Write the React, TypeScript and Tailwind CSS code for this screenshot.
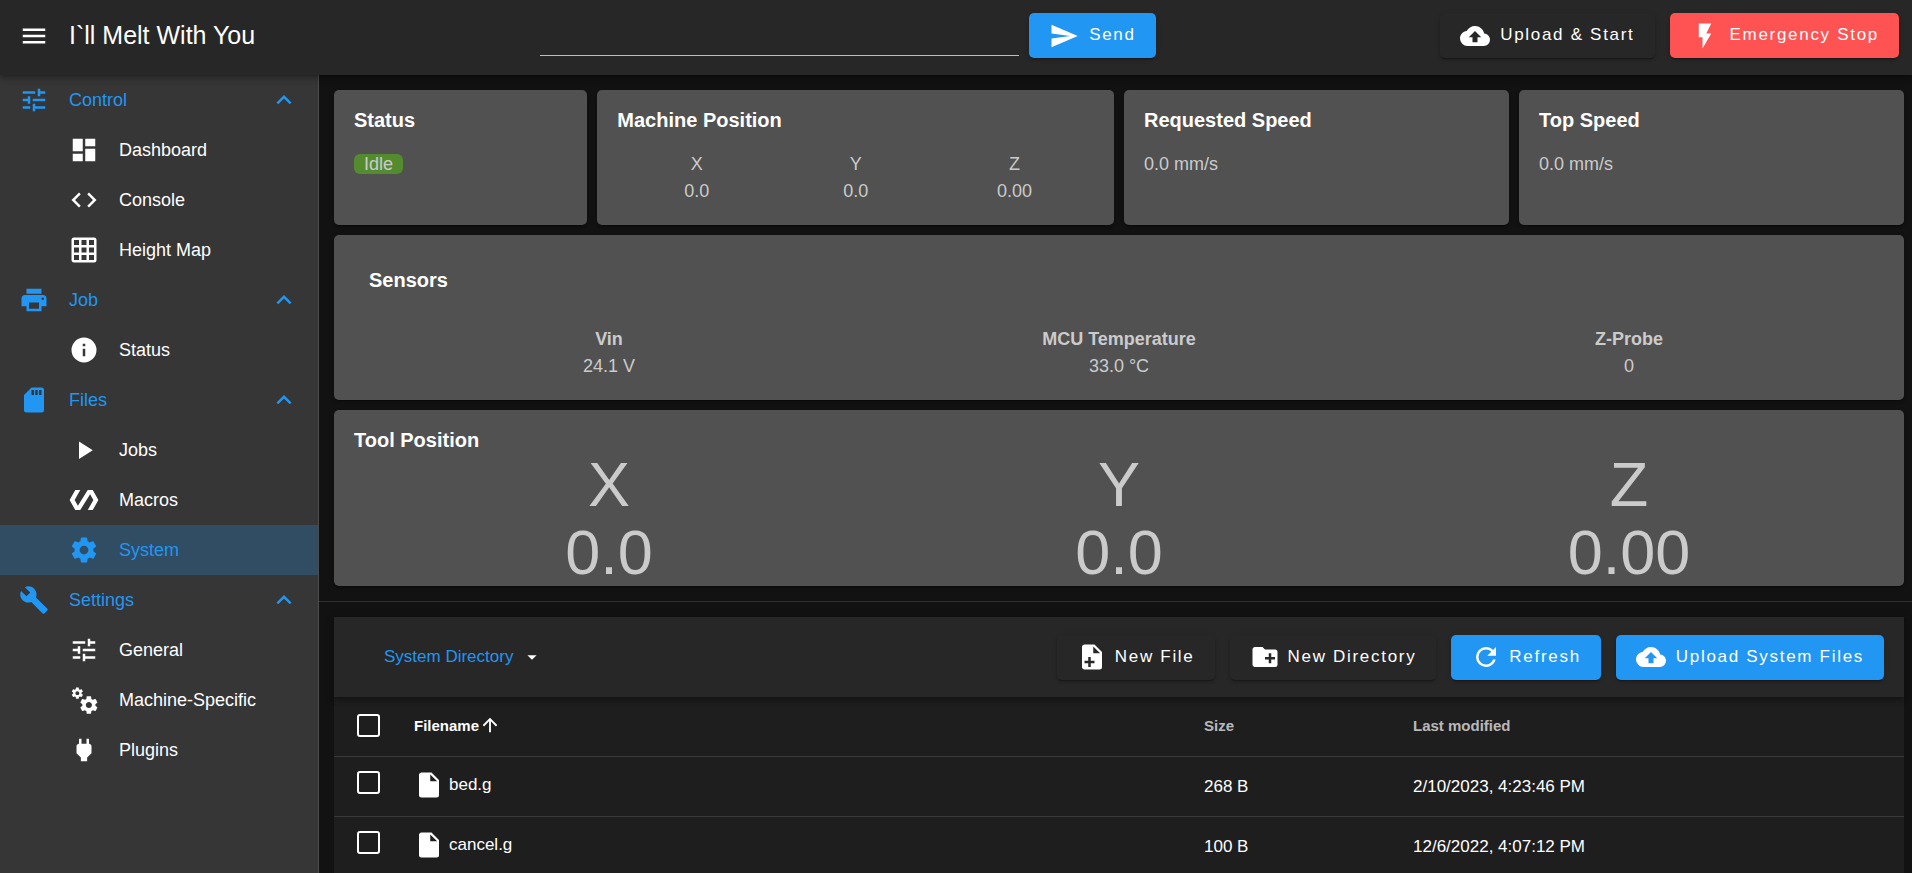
import type { ReactNode } from 'react';

const icons = {
  menu: 'M3,6H21V8H3V6M3,11H21V13H3V11M3,16H21V18H3V16Z',
  tune: 'M3,17V19H9V17H3M3,5V7H13V5H3M13,21V19H21V17H13V15H11V21H13M7,9V11H3V13H7V15H9V9H7M21,13V11H11V13H21M15,9H17V7H21V5H17V3H15V9Z',
  dashboard: 'M13,3V9H21V3M13,21H21V11H13M3,21H11V15H3M3,13H11V3H3V13Z',
  code: 'M14.6,16.6L19.2,12L14.6,7.4L16,6L22,12L16,18L14.6,16.6M9.4,16.6L4.8,12L9.4,7.4L8,6L2,12L8,18L9.4,16.6Z',
  grid: 'M10,4V8H14V4H10M16,4V8H20V4H16M16,10V14H20V10H16M16,16V20H20V16H16M14,20V16H10V20H14M8,20V16H4V20H8M8,14V10H4V14H8M8,8V4H4V8H8M10,14H14V10H10V14M4,2H20A2,2 0 0,1 22,4V20A2,2 0 0,1 20,22H4C2.92,22 2,21.1 2,20V4A2,2 0 0,1 4,2Z',
  printer: 'M18,3H6V7H18M19,12A1,1 0 0,1 18,11A1,1 0 0,1 19,10A1,1 0 0,1 20,11A1,1 0 0,1 19,12M16,19H8V14H16M19,8H5A3,3 0 0,0 2,11V17H6V21H18V17H22V11A3,3 0 0,0 19,8Z',
  info: 'M13,9H11V7H13M13,17H11V11H13M12,2A10,10 0 0,0 2,12A10,10 0 0,0 12,22A10,10 0 0,0 22,12A10,10 0 0,0 12,2Z',
  sd: 'M18,8H16V4H18M15,8H13V4H15M12,8H10V4H12M18,2H10L4,8V20A2,2 0 0,0 6,22H18A2,2 0 0,0 20,20V4A2,2 0 0,0 18,2Z',
  play: 'M8,5.14V19.14L19,12.14L8,5.14Z',
  polymer: 'M19,4H15L7.1,16.63L4.5,12L9,4H5L0.5,12L5,20H9L16.89,7.37L19.5,12L15,20H19L23.5,12L19,4Z',
  cog: 'M12,15.5A3.5,3.5 0 0,1 8.5,12A3.5,3.5 0 0,1 12,8.5A3.5,3.5 0 0,1 15.5,12A3.5,3.5 0 0,1 12,15.5M19.43,12.97C19.47,12.65 19.5,12.33 19.5,12C19.5,11.67 19.47,11.34 19.43,11L21.54,9.37C21.73,9.22 21.78,8.95 21.66,8.73L19.66,5.27C19.54,5.05 19.27,4.96 19.05,5.05L16.56,6.05C16.04,5.66 15.5,5.32 14.87,5.07L14.5,2.42C14.46,2.18 14.25,2 14,2H10C9.75,2 9.54,2.18 9.5,2.42L9.13,5.07C8.5,5.32 7.96,5.66 7.44,6.05L4.95,5.05C4.73,4.96 4.46,5.05 4.34,5.27L2.34,8.73C2.21,8.95 2.27,9.22 2.46,9.37L4.57,11C4.53,11.34 4.5,11.67 4.5,12C4.5,12.33 4.53,12.65 4.57,12.97L2.46,14.63C2.27,14.78 2.21,15.05 2.34,15.27L4.34,18.73C4.46,18.95 4.73,19.03 4.95,18.95L7.44,17.94C7.96,18.34 8.5,18.68 9.13,18.93L9.5,21.58C9.54,21.82 9.75,22 10,22H14C14.25,22 14.46,21.82 14.5,21.58L14.87,18.93C15.5,18.67 16.04,18.34 16.56,17.94L19.05,18.95C19.27,19.03 19.54,18.95 19.66,18.73L21.66,15.27C21.78,15.05 21.73,14.78 21.54,14.63L19.43,12.97Z',
  wrench: 'M22.7,19L13.6,9.9C14.5,7.6 14,4.9 12.1,3C10.1,1 7.1,0.6 4.7,1.7L9,6L6,9L1.6,4.7C0.4,7.1 0.9,10.1 2.9,12.1C4.8,14 7.5,14.5 9.8,13.6L18.9,22.7C19.3,23.1 19.9,23.1 20.3,22.7L22.6,20.4C23.1,20 23.1,19.3 22.7,19Z',
  cogs: 'M15.9,18.45C17.25,18.45 18.35,17.35 18.35,16C18.35,14.65 17.25,13.55 15.9,13.55C14.54,13.55 13.45,14.65 13.45,16C13.45,17.35 14.54,18.45 15.9,18.45M21.1,16.68L22.58,17.84C22.71,17.95 22.75,18.13 22.66,18.29L21.26,20.71C21.17,20.86 21,20.92 20.83,20.86L19.09,20.16C18.73,20.44 18.33,20.67 17.91,20.85L17.64,22.7C17.62,22.87 17.47,23 17.3,23H14.5C14.32,23 14.18,22.87 14.15,22.7L13.89,20.85C13.46,20.67 13.07,20.44 12.71,20.16L10.96,20.86C10.81,20.92 10.62,20.86 10.54,20.71L9.14,18.29C9.05,18.13 9.09,17.95 9.22,17.84L10.7,16.68L10.65,16L10.7,15.31L9.22,14.16C9.09,14.05 9.05,13.86 9.14,13.71L10.54,11.29C10.62,11.13 10.81,11.07 10.96,11.13L12.71,11.84C13.07,11.56 13.46,11.32 13.89,11.15L14.15,9.29C14.18,9.13 14.32,9 14.5,9H17.3C17.47,9 17.62,9.13 17.64,9.29L17.91,11.15C18.33,11.32 18.73,11.56 19.09,11.84L20.83,11.13C21,11.07 21.17,11.13 21.26,11.29L22.66,13.71C22.75,13.86 22.71,14.05 22.58,14.16L21.1,15.31L21.15,16L21.1,16.68M6.69,8.07C7.56,8.07 8.26,7.37 8.26,6.5C8.26,5.63 7.56,4.92 6.69,4.92A1.58,1.58 0 0,0 5.11,6.5C5.11,7.37 5.82,8.07 6.69,8.07M10.03,6.94L11,7.68C11.07,7.75 11.09,7.87 11.03,7.97L10.13,9.53C10.08,9.63 9.96,9.67 9.86,9.63L8.74,9.18L8,9.62L7.81,10.81C7.79,10.92 7.7,11 7.59,11H5.79C5.67,11 5.58,10.92 5.56,10.81L5.4,9.62L4.64,9.18L3.52,9.63C3.41,9.67 3.3,9.63 3.24,9.53L2.34,7.97C2.28,7.87 2.31,7.75 2.39,7.68L3.34,6.94L3.31,6.5L3.34,6.06L2.39,5.32C2.31,5.25 2.28,5.13 2.34,5.03L3.24,3.47C3.3,3.37 3.41,3.33 3.52,3.37L4.63,3.82L5.4,3.38L5.56,2.19C5.58,2.08 5.67,2 5.79,2H7.59C7.7,2 7.79,2.08 7.81,2.19L8,3.38L8.74,3.82L9.86,3.37C9.96,3.33 10.08,3.37 10.13,3.47L11.03,5.03C11.09,5.13 11.07,5.25 11,5.32L10.03,6.06L10.06,6.5L10.03,6.94Z',
  plug: 'M16,7V3H14V7H10V3H8V7H8C7,7 6,8 6,9V14.5L9.5,18V21H14.5V18L18,14.5V9C18,8 17,7 16,7Z',
  chevronUp: 'M7.41,15.41L12,10.83L16.59,15.41L18,14L12,8L6,14L7.41,15.41Z',
  send: 'M2,21L23,12L2,3V10L17,12L2,14V21Z',
  cloudUpload: 'M14,13V17H10V13H7L12,8L17,13M19.35,10.03C18.67,6.59 15.64,4 12,4C9.11,4 6.6,5.64 5.35,8.03C2.34,8.36 0,10.9 0,14A6,6 0 0,0 6,20H19A5,5 0 0,0 24,15C24,12.36 21.95,10.22 19.35,10.03Z',
  flash: 'M7,2V13H10V22L17,10H13L17,2H7Z',
  filePlus: 'M13,9H18.5L13,3.5V9M6,2H14L20,8V20A2,2 0 0,1 18,22H6C4.89,22 4,21.1 4,20V4C4,2.89 4.89,2 6,2M11,15V12H9V15H6V17H9V20H11V17H14V15H11Z',
  folderPlus: 'M10,4L12,6H20A2,2 0 0,1 22,8V18A2,2 0 0,1 20,20H4C2.89,20 2,19.1 2,18V6C2,4.89 2.89,4 4,4H10M15,9V12H12V14H15V17H17V14H20V12H17V9H15Z',
  refresh: 'M17.65,6.35C16.2,4.9 14.21,4 12,4A8,8 0 0,0 4,12A8,8 0 0,0 12,20C15.73,20 18.84,17.45 19.73,14H17.65C16.83,16.33 14.61,18 12,18A6,6 0 0,1 6,12A6,6 0 0,1 12,6C13.66,6 15.14,6.69 16.22,7.78L13,11H20V4L17.65,6.35Z',
  file: 'M13,9V3.5L18.5,9M6,2C4.89,2 4,2.89 4,4V20A2,2 0 0,0 6,22H18A2,2 0 0,0 20,20V8L14,2H6Z',
  menuDown: 'M7,10L12,15L17,10H7Z',
  arrowUp: 'M13,20H11V8L5.5,13.5L4.08,12.08L12,4.16L19.92,12.08L18.5,13.5L13,8V20Z',
} as const;

type IconName = keyof typeof icons;

const navGroups: {
  label: string;
  icon: IconName;
  items: { label: string; icon: IconName; active?: boolean }[];
}[] = [
  {
    label: 'Control',
    icon: 'tune',
    items: [
      { label: 'Dashboard', icon: 'dashboard' },
      { label: 'Console', icon: 'code' },
      { label: 'Height Map', icon: 'grid' },
    ],
  },
  { label: 'Job', icon: 'printer', items: [{ label: 'Status', icon: 'info' }] },
  {
    label: 'Files',
    icon: 'sd',
    items: [
      { label: 'Jobs', icon: 'play' },
      { label: 'Macros', icon: 'polymer' },
      { label: 'System', icon: 'cog', active: true },
    ],
  },
  {
    label: 'Settings',
    icon: 'wrench',
    items: [
      { label: 'General', icon: 'tune' },
      { label: 'Machine-Specific', icon: 'cogs' },
      { label: 'Plugins', icon: 'plug' },
    ],
  },
];

const files = [
  { name: 'bed.g', size: '268 B', modified: '2/10/2023, 4:23:46 PM' },
  { name: 'cancel.g', size: '100 B', modified: '12/6/2022, 4:07:12 PM' },
];

export default function App() {
  return (
    <div className="flex h-screen flex-col overflow-hidden bg-[#121212] font-['Liberation_Sans',Arial,sans-serif] text-lg text-white">
      <TopBar />
      <div className="flex min-h-0 flex-1">
        <Sidebar />
        <main className="min-w-0 flex-1 overflow-hidden">
          <div className="flex flex-col gap-[10px] pt-[15px] pr-2 pb-[15px] pl-[15px]">
            <StatusCards />
            <Sensors />
            <ToolPosition />
          </div>
          <hr className="border-[#2e2e2e]" />
          <SystemFiles />
        </main>
      </div>
    </div>
  );
}

function TopBar() {
  return (
    <header className="relative z-10 flex h-[75px] shrink-0 items-center bg-[#272727] pr-[13px] pb-1 pl-[19px] shadow-[0_2px_4px_-1px_rgba(0,0,0,0.2),0_4px_5px_rgba(0,0,0,0.14),0_1px_10px_rgba(0,0,0,0.12)]">
      <button aria-label="Toggle menu">
        <Icon name="menu" />
      </button>
      <h1 className="ml-5 pb-[2px] text-[25px] leading-8 whitespace-nowrap">I`ll Melt With You</h1>
      <form className="flex min-w-0 flex-1 justify-center px-4" onSubmit={(e) => e.preventDefault()}>
        <div className="flex w-full max-w-[616px] gap-[10px]">
          <input
            aria-label="Send code"
            className="h-[43px] min-w-0 flex-1 border-b border-white/70 bg-transparent outline-none"
          />
          <Button icon="send" tone="primary">Send</Button>
        </div>
      </form>
      <div className="flex gap-[15px]">
        <Button icon="cloudUpload">Upload &amp; Start</Button>
        <Button icon="flash" tone="danger">Emergency Stop</Button>
      </div>
    </header>
  );
}

function Sidebar() {
  return (
    <nav className="w-[319px] shrink-0 border-r border-[#4d4d4d] bg-[#363636]">
      {navGroups.map((group) => (
        <div key={group.label}>
          <button className="flex h-[50px] w-full items-center gap-5 pr-[19px] pl-[19px] text-left text-[#2196f3]">
            <Icon name={group.icon} />
            <span className="flex-1">{group.label}</span>
            <Icon name="chevronUp" />
          </button>
          {group.items.map((item) => (
            <a
              key={item.label}
              href="#"
              className={`flex h-[50px] items-center gap-5 pl-[69px] ${item.active ? 'bg-[#314d63] text-[#2196f3]' : ''}`}
            >
              <Icon name={item.icon} />
              {item.label}
            </a>
          ))}
        </div>
      ))}
    </nav>
  );
}

function StatusCards() {
  return (
    <div className="grid grid-cols-12 gap-[10px]">
      <Card className="col-span-2 px-5 pt-[10px] pb-5">
        <CardTitle>Status</CardTitle>
        <div className="mt-[10px] flex h-[27px] items-center">
          <span className="rounded-md bg-[#558b2f] px-[10px] leading-5">Idle</span>
        </div>
      </Card>
      <Card className="col-span-4 px-5 pt-[10px] pb-5">
        <CardTitle>Machine Position</CardTitle>
        <div className="mt-[11px] grid grid-cols-3 text-center leading-[27px]">
          <Reading label="X" value="0.0" />
          <Reading label="Y" value="0.0" />
          <Reading label="Z" value="0.00" />
        </div>
      </Card>
      <Card className="col-span-3 px-5 pt-[10px] pb-5">
        <CardTitle>Requested Speed</CardTitle>
        <p className="mt-[11px] leading-[27px]">0.0 mm/s</p>
      </Card>
      <Card className="col-span-3 px-5 pt-[10px] pb-5">
        <CardTitle>Top Speed</CardTitle>
        <p className="mt-[11px] leading-[27px]">0.0 mm/s</p>
      </Card>
    </div>
  );
}

function Sensors() {
  return (
    <Card className="px-5 pt-[25px] pb-5">
      <div className="pl-[15px]">
        <CardTitle>Sensors</CardTitle>
      </div>
      <div className="mt-[26px] grid grid-cols-3 text-center leading-[27px]">
        <Reading label={<strong>Vin</strong>} value="24.1 V" />
        <Reading label={<strong>MCU Temperature</strong>} value="33.0 °C" />
        <Reading label={<strong>Z-Probe</strong>} value="0" />
      </div>
    </Card>
  );
}

function ToolPosition() {
  return (
    <Card className="px-5 pt-5">
      <h2 className="text-xl leading-5 font-bold text-white">Tool Position</h2>
      <div className="grid grid-cols-3 text-center text-[63px] leading-[68px]">
        <Reading label="X" value="0.0" />
        <Reading label="Y" value="0.0" />
        <Reading label="Z" value="0.00" />
      </div>
    </Card>
  );
}

function SystemFiles() {
  return (
    <section className="pt-[15px] pr-2 pl-[15px] text-[17px]">
      <div className="relative flex h-20 items-center gap-[15px] bg-[#272727] pr-5 pl-[50px] shadow-[0_2px_4px_-1px_rgba(0,0,0,0.2),0_4px_5px_rgba(0,0,0,0.14),0_1px_10px_rgba(0,0,0,0.12)]">
        <button className="mr-auto flex items-center gap-2">
          <span className="text-[#2196f3]">System Directory</span>
          <Icon name="menuDown" className="size-[22px]" />
        </button>
        <Button icon="filePlus" dense>New File</Button>
        <Button icon="folderPlus" dense>New Directory</Button>
        <Button icon="refresh" tone="primary" dense>Refresh</Button>
        <Button icon="cloudUpload" tone="primary">Upload System Files</Button>
      </div>
      <table className="w-full table-fixed bg-[#1e1e1e] text-left">
        <thead>
          <tr className="h-[59px] border-b border-[#393939] text-[15px] text-white/70">
            <th className="w-[60px] pb-[2px] pl-[23px]">
              <Checkbox label="Select all" />
            </th>
            <th className="pb-[2px] pl-5 text-white">
              <span className="flex items-center">
                Filename
                <Icon name="arrowUp" className="size-[22px]" />
              </span>
            </th>
            <th className="w-[209px] pb-[2px] pl-5">Size</th>
            <th className="w-[511px] pb-[2px] pl-5">Last modified</th>
          </tr>
        </thead>
        <tbody>
          {files.map((file) => (
            <tr key={file.name} className="h-[60px] border-b border-[#393939]">
              <td className="pb-2 pl-[23px]">
                <Checkbox label={`Select ${file.name}`} />
              </td>
              <td className="pb-[2px] pl-5">
                <span className="flex items-center gap-[5px]">
                  <Icon name="file" />
                  {file.name}
                </span>
              </td>
              <td className="pt-[2px] pl-5">{file.size}</td>
              <td className="pt-[2px] pl-5">{file.modified}</td>
            </tr>
          ))}
        </tbody>
      </table>
    </section>
  );
}

function Card({ className, children }: { className: string; children: ReactNode }) {
  return (
    <section
      className={`rounded-[5px] bg-[#515151] text-[#cbcbcb] shadow-[0_3px_1px_-2px_rgba(0,0,0,0.2),0_2px_2px_rgba(0,0,0,0.14),0_1px_5px_rgba(0,0,0,0.12)] ${className}`}
    >
      {children}
    </section>
  );
}

function CardTitle({ children }: { children: ReactNode }) {
  return <h2 className="text-xl leading-10 font-bold text-white">{children}</h2>;
}

function Reading({ label, value }: { label: ReactNode; value: string }) {
  return (
    <div>
      <div>{label}</div>
      <div>{value}</div>
    </div>
  );
}

function Button({
  icon,
  tone = 'dark',
  dense = false,
  children,
}: {
  icon: IconName;
  tone?: 'dark' | 'primary' | 'danger';
  dense?: boolean;
  children: ReactNode;
}) {
  const tones = {
    dark: 'bg-[#272727]',
    primary: 'bg-[#2196f3]',
    danger: 'bg-[#ff5252]',
  } as const;
  return (
    <button
      className={`flex h-[45px] shrink-0 items-center rounded-[5px] px-5 text-[17px] tracking-widest whitespace-nowrap shadow-[0_3px_1px_-2px_rgba(0,0,0,0.2),0_2px_2px_rgba(0,0,0,0.14),0_1px_5px_rgba(0,0,0,0.12)] ${dense ? 'gap-2' : 'gap-[10px]'} ${tones[tone]}`}
    >
      <Icon name={icon} />
      {children}
    </button>
  );
}

function Checkbox({ label }: { label: string }) {
  return (
    <input
      type="checkbox"
      aria-label={label}
      className="block size-[23px] appearance-none rounded-[3px] border-2 border-white checked:bg-[#2196f3]"
    />
  );
}

function Icon({ name, className = 'size-[30px]' }: { name: IconName; className?: string }) {
  return (
    <svg viewBox="0 0 24 24" fill="currentColor" aria-hidden="true" className={`shrink-0 ${className}`}>
      <path d={icons[name]} />
    </svg>
  );
}
